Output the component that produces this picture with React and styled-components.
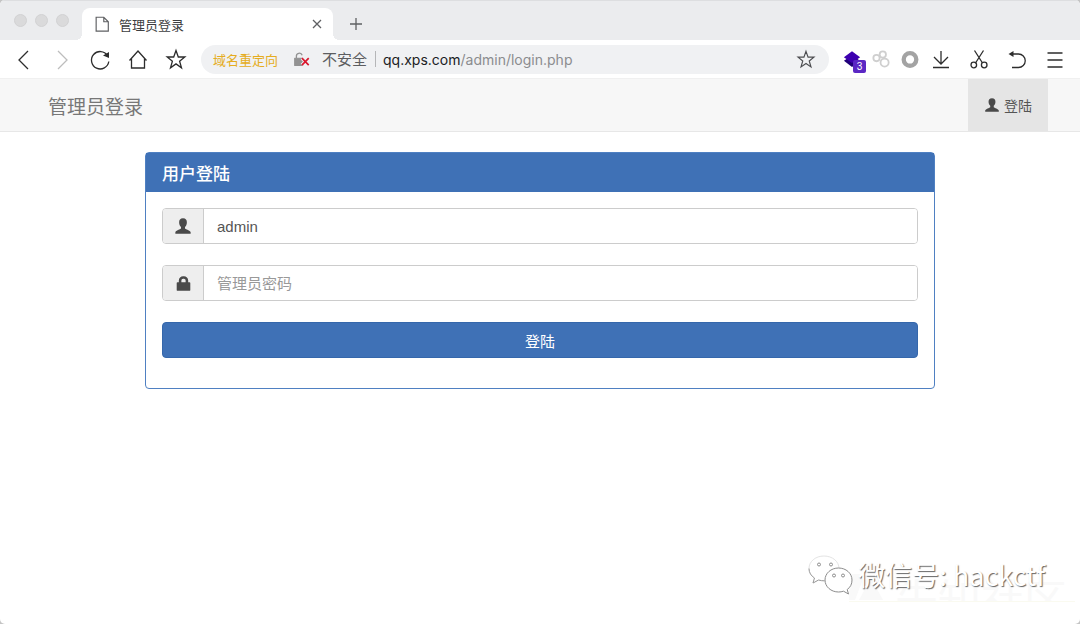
import React from "react";
import styled, { createGlobalStyle } from "styled-components";

const extensions = ["stack", "rings", "circle"];

const ICONS = {
	file: <path d="M3.500 2.500h8.500l5 5v10.500H3.500zM12 2.500v5h5" />,
	close: <path d="M6 6l8 8M14 6l-8 8" />,
	plus: <path d="M10 4v12M4 10h12" />,
	back: <path d="M14 2L5 11l9 9" />,
	forward: <path d="M6 2l9 9-9 9" />,
	reload: (
		<>
			<path d="M17.500 6.500A8.700 8.700 0 1 0 18.800 12.500" />
			<path d="M19 3v6l-6-2.500z" fill="currentColor" stroke="none" />
		</>
	),
	home: <path d="M1.500 11.500L10 2 18.500 11.500M3.500 9.500v9.500h13V9.500" />,
	star: (
		<path d="M10 1.500l2.300 6.500h6.500l-5.200 4.200 1.900 6.600-5.500-3.900-5.500 3.900 1.900-6.600L1.200 8h6.500z" />
	),
	download: <path d="M10 2v13M3 8l7 7 7-7M2 18.500h16" />,
	cut: (
		<>
			<path d="M5.500 1.500l8 12.500M14.500 1.500l-8 12.500" />
			<circle cx="4.800" cy="16" r="2.800" />
			<circle cx="15.200" cy="16" r="2.800" />
		</>
	),
	undo: (
		<>
			<path d="M4 5h7.500a6.700 6.700 0 0 1 0 13.500H5" />
			<path d="M1.500 5L6.500 2v6z" fill="currentColor" stroke="none" />
		</>
	),
	menu: <path d="M2.500 4h15M2.500 11h15M2.500 18h15" />,
	user: (
		<path
			d="M10 1.500c-3 0-4.500 2-4.300 4.800.1 2.200.9 3.700 2.100 4.700v1.700c-.8 1-5.800 1.800-6.300 4.300V18.500h17V17c-.5-2.500-5.500-3.300-6.300-4.300V11c1.200-1 2-2.500 2.100-4.700C14.500 3.500 13 1.500 10 1.500z"
			fill="currentColor"
			stroke="none"
		/>
	),
	lock: (
		<path
			d="M3 8.500h1.500V6.500A5 5 0 0 1 9.500 1.500h1a5 5 0 0 1 5 5v2H17a1 1 0 0 1 1 1v8a1 1 0 0 1-1 1H3a1 1 0 0 1-1-1v-8a1 1 0 0 1 1-1zM7.500 8.500h5V6.500a2 2 0 0 0-2-2h-1a2 2 0 0 0-2 2z"
			fill="currentColor"
			fillRule="evenodd"
			stroke="none"
		/>
	),
	stack: (
		<>
			<path d="M1 12l9-6 9 6-9 7z" fill="#20007a" stroke="none" />
			<path d="M1 8l9-6.500L19 8l-9 6.500z" fill="#3d00b0" stroke="none" />
		</>
	),
	rings: (
		<g stroke="#cfcfcf" strokeWidth="2">
			<circle cx="5" cy="9" r="3.500" />
			<circle cx="12" cy="5" r="3.500" />
			<circle cx="14" cy="14" r="4.500" />
		</g>
	),
	circle: <circle cx="10" cy="10.500" r="7" stroke="#a3a3a3" strokeWidth="4.800" />,
	insecure: (
		<>
			<path
				d="M2 8.500h10V17H2z"
				fill="#929292"
				stroke="#929292"
				strokeLinejoin="round"
			/>
			<path d="M4 8.500V6.500a3.500 3.500 0 0 1 6.800-1.500" stroke="#929292" strokeWidth="1.500" />
			<path d="M10.500 8.500l8 8M18.500 8.500l-8 8" stroke="#f0f1f3" strokeWidth="4" />
			<path d="M10.500 8.500l8 8M18.500 8.500l-8 8" stroke="#d9172d" strokeWidth="2" />
		</>
	),
};

const Icon = ({ name, size = 20 }) => (
	<svg
		width={size}
		height={size}
		viewBox="0 0 20 20"
		fill="none"
		stroke="currentColor"
		strokeWidth="1.300"
		overflow="visible"
		aria-hidden="true"
	>
		{ICONS[name]}
	</svg>
);

const App = () => {
	return (
		<>
			<GlobalStyle />
			<Window>
				<TabStrip>
					<Lights>
						<Light />
						<Light />
						<Light />
					</Lights>
					<Tab>
						<Icon name="file" size={18} />
						<TabTitle>管理员登录</TabTitle>
						<IconButton aria-label="关闭标签页" $color="#5f6063">
							<Icon name="close" size={20} />
						</IconButton>
					</Tab>
					<IconButton aria-label="新标签页" $color="#5f6063">
						<Icon name="plus" size={20} />
					</IconButton>
				</TabStrip>
				<Toolbar>
					<NavButtons>
						<IconButton aria-label="后退">
							<Icon name="back" />
						</IconButton>
						<IconButton aria-label="前进" $color="#bdbdbd">
							<Icon name="forward" />
						</IconButton>
						<IconButton aria-label="刷新">
							<Icon name="reload" />
						</IconButton>
						<IconButton aria-label="主页">
							<Icon name="home" />
						</IconButton>
						<IconButton aria-label="收藏夹">
							<Icon name="star" />
						</IconButton>
					</NavButtons>
					<AddressBar>
						<Redirect>域名重定向</Redirect>
						<Icon name="insecure" size={17} />
						<Insecure>不安全</Insecure>
						<Url>
							<b>qq.xps.com</b>/admin/login.php
						</Url>
						<IconButton aria-label="收藏" $color="#4c4d50">
							<Icon name="star" size={18} />
						</IconButton>
					</AddressBar>
					<Extensions>
						{extensions.map((name) => (
							<IconButton key={name} aria-label={name}>
								<Icon name={name} size={18} />
								{name === "stack" && <Badge>3</Badge>}
							</IconButton>
						))}
					</Extensions>
					<Tools>
						<IconButton aria-label="下载">
							<Icon name="download" />
						</IconButton>
						<IconButton aria-label="截图">
							<Icon name="cut" />
						</IconButton>
						<IconButton aria-label="撤销">
							<Icon name="undo" />
						</IconButton>
						<IconButton aria-label="菜单">
							<Icon name="menu" />
						</IconButton>
					</Tools>
				</Toolbar>
				<Navbar>
					<Brand href="#">管理员登录</Brand>
					<NavLink href="#">
						<Icon name="user" size={16} />
						登陆
					</NavLink>
				</Navbar>
				<Main>
					<Panel>
						<PanelHeading>用户登陆</PanelHeading>
						<LoginForm onSubmit={(e) => e.preventDefault()}>
							<InputGroup>
								<Addon htmlFor="username" aria-label="用户名">
									<Icon name="user" size={18} />
								</Addon>
								<Input id="username" type="text" defaultValue="admin" />
							</InputGroup>
							<InputGroup>
								<Addon htmlFor="password" aria-label="管理员密码">
									<Icon name="lock" size={17} />
								</Addon>
								<Input
									id="password"
									type="password"
									placeholder="管理员密码"
								/>
							</InputGroup>
							<SubmitButton type="submit">登陆</SubmitButton>
						</LoginForm>
					</Panel>
				</Main>
				<FaintMark>
					<svg width="36" height="26" viewBox="0 0 36 26" fill="#f9f9f9" aria-hidden="true">
						<path d="M0 0h16L6 26H0zM22 4l12 22H10z" />
					</svg>
					先知社区
				</FaintMark>
				<Watermark>
					<WeChatLogo />
					微信号: hackctf
				</Watermark>
			</Window>
		</>
	);
};

const WeChatLogo = () => (
	<svg width="46" height="42" viewBox="0 0 46 42" fill="#fff" aria-hidden="true">
		<path
			d="M17 2C8.500 2 2 7.500 2 14.500c0 4 2 7.300 5.500 9.500L6 29l5.500-3c2 .6 4 .8 6 .8C26 27 32 21 32 14.500 32 7.500 25.500 2 17 2z"
			stroke="#dcdcdc"
			strokeWidth=".8"
		/>
		<path d="M2 14.500c0 4 2 7.300 5.500 9.500L6 29l5.500-3c2 .6 4 .8 6 .8" stroke="#9a9a9a" />
		<path
			d="M31.500 14C24 14 18 19.300 18 26s6 12 13.500 12c1.800 0 3.500-.3 5-.8l5 2.800-1.300-4.500C43.500 33.200 45 30 45 26c0-6.700-6-12-13.500-12z"
			stroke="#8c8c8c"
		/>
		<g stroke="#8c8c8c">
			<circle cx="12" cy="10.500" r="1.500" />
			<circle cx="24" cy="10.500" r="1.500" />
			<circle cx="27" cy="21.500" r="1.500" />
			<circle cx="36" cy="21.500" r="1.500" />
		</g>
	</svg>
);

export default App;

const GlobalStyle = createGlobalStyle`
	* {
		box-sizing: border-box;
	}
	body {
		margin: 0;
		background: #c4c4c4;
		font-family: "Noto Sans CJK SC", sans-serif;
		font-size: 15px;
		color: #555;
	}
	button,
	input {
		font: inherit;
	}
	svg {
		display: block;
		flex-shrink: 0;
	}
`;

const Window = styled.div`
	position: relative;
	display: flex;
	flex-direction: column;
	min-height: 100vh;
	border-radius: 5px;
	background: #fff;
	overflow: hidden;
`;

const TabStrip = styled.div`
	display: flex;
	align-items: flex-end;
	gap: 13px;
	height: 40px;
	padding-left: 14px;
	background: #ebecee;
	border-top: 1px solid #dddee0;
`;

const Lights = styled.div`
	display: flex;
	gap: 8px;
	align-self: center;
`;

const Light = styled.span`
	width: 13px;
	height: 13px;
	border: 1px solid #d2d2d3;
	border-radius: 50%;
	background: #dadadb;
`;

const Tab = styled.div`
	position: relative;
	display: flex;
	align-items: center;
	gap: 8px;
	width: 251px;
	height: 32px;
	padding: 0 6px 0 11px;
	border-radius: 8px 8px 0 0;
	background: #fff;
	color: #5f6063;
	&::before,
	&::after {
		content: "";
		position: absolute;
		bottom: 0;
		width: 6px;
		height: 6px;
	}
	&::before {
		right: 100%;
		background: radial-gradient(circle at 0 0, #ebecee 6px, #fff 6px);
	}
	&::after {
		left: 100%;
		background: radial-gradient(circle at 100% 0, #ebecee 6px, #fff 6px);
	}
`;

const TabTitle = styled.span`
	flex: 1;
	font-size: 13px;
	color: #3c3d40;
`;

const IconButton = styled.button`
	position: relative;
	display: flex;
	align-items: center;
	padding: 0;
	border: 0;
	background: none;
	color: ${({ $color }) => $color || "#2d2d2d"};
	cursor: pointer;
	${TabStrip} > & {
		height: 32px;
	}
`;

const Toolbar = styled.div`
	display: flex;
	align-items: center;
	height: 38px;
	padding: 0 15px 0 14px;
`;

const NavButtons = styled.div`
	display: flex;
	gap: 18px;
	margin-right: 15px;
`;

const AddressBar = styled.div`
	display: flex;
	flex: 1;
	align-items: center;
	height: 29px;
	padding: 0 14px 0 12px;
	border-radius: 15px;
	background: #f0f1f3;
`;

const Redirect = styled.span`
	margin-right: 15px;
	font-size: 13px;
	color: #e5ac20;
`;

const Insecure = styled.span`
	margin-left: 12px;
	padding-right: 8px;
	border-right: 1px solid #b5b6b8;
	line-height: 16px;
	color: #5c5d60;
`;

const Url = styled.span`
	flex: 1;
	margin-left: 7px;
	font-family: Inter, "Liberation Sans", sans-serif;
	font-size: 14px;
	color: #8b8c8f;
	b {
		font-weight: 400;
		color: #202124;
	}
`;

const Extensions = styled.div`
	display: flex;
	gap: 11px;
	margin: 0 12px 0 14px;
`;

const Badge = styled.span`
	position: absolute;
	right: -5px;
	bottom: -5px;
	width: 13px;
	height: 13px;
	border-radius: 2px;
	background: #5b27c4;
	font-family: "Liberation Sans", sans-serif;
	font-size: 10px;
	line-height: 13px;
	text-align: center;
	color: #fff;
`;

const Tools = styled.div`
	display: flex;
	gap: 18px;
`;

const Navbar = styled.nav`
	display: flex;
	align-items: center;
	justify-content: space-between;
	height: 54px;
	padding: 0 32px 0 48px;
	border-top: 1px solid #f0f0f0;
	border-bottom: 1px solid #e7e7e7;
	background: #f7f7f7;
`;

const Brand = styled.a`
	font-size: 19px;
	color: #777;
	text-decoration: none;
`;

const NavLink = styled.a`
	display: flex;
	align-items: center;
	gap: 4px;
	height: 100%;
	padding: 0 16px;
	background: #e5e5e5;
	font-size: 14px;
	color: #555;
	text-decoration: none;
	svg {
		color: #4a4a4a;
	}
`;

const Main = styled.main`
	padding: 20px 16px;
`;

const Panel = styled.section`
	max-width: 790px;
	margin: 0 auto;
	border: 1px solid #4f80c2;
	border-radius: 4px;
`;

const PanelHeading = styled.h1`
	margin: 0;
	padding: 1px 16px 0;
	background: #3f71b6;
	font-size: 17px;
	font-weight: 500;
	line-height: 38px;
	color: #fff;
`;

const LoginForm = styled.form`
	display: flex;
	flex-direction: column;
	gap: 21px;
	padding: 16px 16px 30px;
`;

const InputGroup = styled.div`
	display: flex;
	height: 36px;
	border: 1px solid #ccc;
	border-radius: 4px;
	overflow: hidden;
`;

const Addon = styled.label`
	display: flex;
	align-items: center;
	justify-content: center;
	width: 41px;
	border-right: 1px solid #ccc;
	background: #eee;
	color: #4a4a4a;
`;

const Input = styled.input`
	flex: 1;
	min-width: 0;
	padding: 0 13px;
	border: 0;
	outline: 0;
	background: #fff;
	font-family: "Liberation Sans", "Noto Sans CJK SC", sans-serif;
	color: #555;
	&::placeholder {
		font-family: "Noto Sans CJK SC", sans-serif;
		color: #999;
	}
`;

const SubmitButton = styled.button`
	height: 36px;
	padding: 0;
	border: 1px solid #3567ab;
	border-radius: 4px;
	background: #3f71b6;
	color: #fff;
	cursor: pointer;
`;

const Watermark = styled.div`
	position: absolute;
	right: 35px;
	bottom: 28px;
	display: flex;
	align-items: center;
	gap: 5px;
	font-size: 27px;
	line-height: 42px;
	color: #fff;
	text-shadow: 1px 1px 1px #666;
`;

/* only the upper part of the glyphs shows above the underline */
const FaintMark = styled.div`
	position: absolute;
	right: 5px;
	bottom: 22px;
	display: flex;
	gap: 10px;
	height: 28px;
	padding-right: 8px;
	border-bottom: 1px solid #fafaf0;
	overflow: hidden;
	font-size: 43px;
	line-height: 46px;
	color: #f9f9f9;
`;
